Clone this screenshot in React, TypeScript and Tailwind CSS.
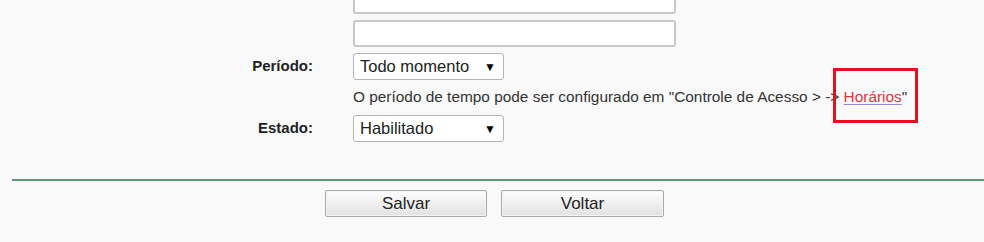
import React from "react";

function FakeSelect({ value, width }: { value: string; width: string }) {
  return (
    <div
      className={`${width} h-[27px] bg-white border border-[#b4b4b4] rounded-[3px] flex items-center justify-between pl-[6px] pr-[7px] text-[16.5px] text-[#222]`}
    >
      <span>{value}</span>
      <span className="text-[12px] text-black">▼</span>
    </div>
  );
}

function Row({ label, children, className = "" }: { label?: string; children: React.ReactNode; className?: string }) {
  return (
    <div className={`flex items-center ${className}`}>
      <div className="w-[313px] shrink-0 text-right font-bold text-[15px] text-[#222]">{label}</div>
      <div className="pl-[40px]">{children}</div>
    </div>
  );
}

export default function App() {
  return (
    <div
      className="w-[984px] h-[242px] overflow-hidden bg-[#f9f9f9]"
      style={{ fontFamily: '"Liberation Sans", Arial, sans-serif' }}
    >
      <div className="-mt-[13px]">
        <Row>
          <div className="w-[323px] h-[27px] bg-white border-2 border-[#c8c8c8] rounded-[3px]" />
        </Row>
        <Row className="mt-[6px]">
          <div className="w-[323px] h-[27px] bg-white border-2 border-[#c8c8c8] rounded-[3px]" />
        </Row>
        <Row label="Período:" className="mt-[6px]">
          <FakeSelect value="Todo momento" width="w-[151px]" />
        </Row>
        <Row className="mt-[8px]">
          <div className="text-[15.4px] text-[#333] leading-[18px] whitespace-nowrap">
            O período de tempo pode ser configurado em "Controle de Acesso &gt; -&gt;{" "}
            <span className="relative">
              <span className="text-[#e8323a] underline decoration-[#9a86d6] underline-offset-2">Horários</span>"
              <span className="absolute -left-[11px] -right-[11px] -top-[20px] -bottom-[18px] border-[3px] border-[#e3111f]" />
            </span>
          </div>
        </Row>
        <Row label="Estado:" className="mt-[9px]">
          <FakeSelect value="Habilitado" width="w-[151px]" />
        </Row>
      </div>
      <div className="ml-[12px] mt-[37px] h-[2px] bg-[#5f957a]" />
      <div className="flex gap-[14px] pl-[325px] mt-[9px]">
        <button className="w-[162px] h-[27px] border border-[#a9a9a9] rounded-[2px] bg-gradient-to-b from-[#fdfdfd] to-[#e2e2e2] text-[17px] text-[#222] shadow-[inset_0_0_0_1px_#f4f4f4]">
          Salvar
        </button>
        <button className="w-[163px] h-[27px] border border-[#a9a9a9] rounded-[2px] bg-gradient-to-b from-[#fdfdfd] to-[#e2e2e2] text-[17px] text-[#222] shadow-[inset_0_0_0_1px_#f4f4f4]">
          Voltar
        </button>
      </div>
    </div>
  );
}
